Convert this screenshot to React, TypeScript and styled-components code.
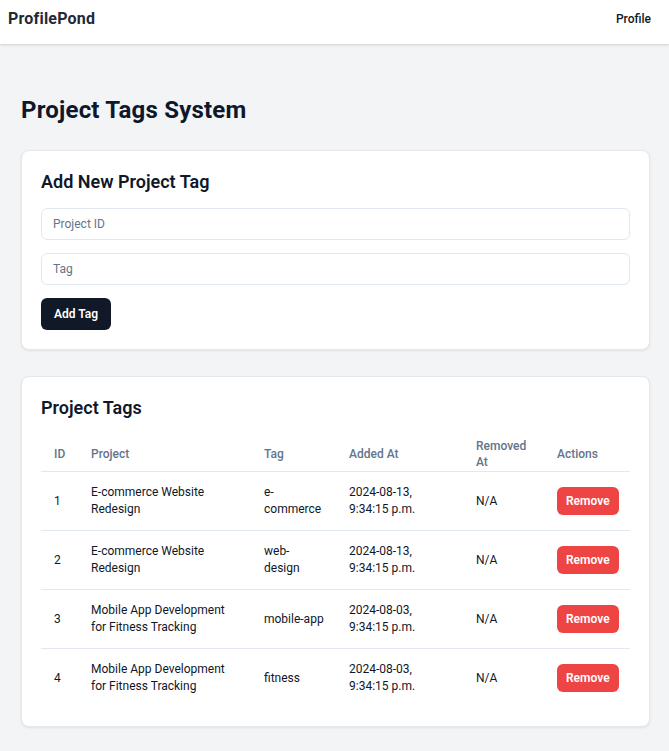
import React, { useState } from 'react';
import styled, { createGlobalStyle } from 'styled-components';

const GlobalStyle = createGlobalStyle`
  * { box-sizing: border-box; }
  body {
    margin: 0;
    background: #f3f4f6;
    font-family: Roboto, Inter, "Liberation Sans", sans-serif;
    color: #0f172a;
  }
`;

const NavBar = styled.nav`
  height: 44px;
  padding: 8px 18px 0 8px;
  display: flex;
  align-items: flex-start;
  justify-content: space-between;
  background: #fff;
  box-shadow: 0 1px 3px rgba(0, 0, 0, 0.1), 0 1px 2px rgba(0, 0, 0, 0.06);
`;

const Logo = styled.div`
  font-size: 16px;
  line-height: 22px;
  font-weight: 700;
  color: #1f2937;
  letter-spacing: 0.2px;
`;

const NavLink = styled.a`
  font-size: 12px;
  line-height: 22px;
  font-weight: 500;
  color: #111827;
  text-decoration: none;
  cursor: pointer;
`;

const Main = styled.main`
  padding: 50px 19px 24px 21px;
`;

const PageTitle = styled.h1`
  margin: 0 0 24px;
  font-size: 24px;
  line-height: 32px;
  font-weight: 700;
  color: #0f172a;
  letter-spacing: 0.2px;
`;

const Card = styled.section`
  background: #fff;
  border: 1px solid #e5e7eb;
  border-radius: 8px;
  box-shadow: 0 1px 3px rgba(0, 0, 0, 0.08);
  padding: 19px;
  margin-bottom: 26px;
`;

const CardTitle = styled.h2<{ $gap: number }>`
  margin: 0 0 ${(p) => p.$gap}px;
  font-size: 18px;
  line-height: 24px;
  font-weight: 600;
  color: #0f172a;
`;

const Form = styled.form`
  display: flex;
  flex-direction: column;
  align-items: flex-start;
  gap: 13px;
`;

const Input = styled.input`
  width: 100%;
  height: 32px;
  padding: 0 11px;
  border: 1px solid #e2e8f0;
  border-radius: 6px;
  font-family: inherit;
  font-size: 12px;
  color: #0f172a;
  outline: none;

  &::placeholder {
    color: #64748b;
  }
`;

const Button = styled.button<{ $variant?: 'dark' | 'danger' }>`
  border: none;
  border-radius: 6px;
  font-family: inherit;
  font-size: 12px;
  font-weight: 600;
  color: #fff;
  cursor: pointer;
  background: ${(p) => (p.$variant === 'danger' ? '#ef4444' : '#111827')};
  height: ${(p) => (p.$variant === 'danger' ? '28px' : '32px')};
  padding: ${(p) => (p.$variant === 'danger' ? '0 9px' : '0 13px')};
`;

const Table = styled.table`
  width: 100%;
  border-collapse: collapse;
  table-layout: fixed;
  font-size: 12px;
`;

const Th = styled.th<{ $w: number }>`
  width: ${(p) => p.$w}px;
  text-align: left;
  vertical-align: middle;
  padding: 2px 11px 1px 13px;
  line-height: 16px;
  font-weight: 500;
  color: #64748b;
`;

const HeadRow = styled.tr`
  border-bottom: 1px solid #e2e8f0;
`;

const Row = styled.tr`
  border-bottom: 1px solid #e2e8f0;

  &:last-child {
    border-bottom: none;
  }
`;

const Td = styled.td`
  padding: 12px 11px 12px 13px;
  line-height: 17px;
  vertical-align: middle;
  color: #0f172a;
`;

type TagRow = {
  id: number;
  project: string;
  tag: string;
  addedAt: string;
  removedAt: string | null;
};

const initialRows: TagRow[] = [
  { id: 1, project: 'E-commerce Website Redesign', tag: 'e-commerce', addedAt: '2024-08-13, 9:34:15 p.m.', removedAt: null },
  { id: 2, project: 'E-commerce Website Redesign', tag: 'web-design', addedAt: '2024-08-13, 9:34:15 p.m.', removedAt: null },
  { id: 3, project: 'Mobile App Development for Fitness Tracking', tag: 'mobile-app', addedAt: '2024-08-03, 9:34:15 p.m.', removedAt: null },
  { id: 4, project: 'Mobile App Development for Fitness Tracking', tag: 'fitness', addedAt: '2024-08-03, 9:34:15 p.m.', removedAt: null },
];

const columns = [
  { label: 'ID', w: 37 },
  { label: 'Project', w: 173 },
  { label: 'Tag', w: 85 },
  { label: 'Added At', w: 127 },
  { label: 'Removed At', w: 81 },
  { label: 'Actions', w: 86 },
];

export default function App() {
  const [rows, setRows] = useState(initialRows);
  const [projectId, setProjectId] = useState('');
  const [tag, setTag] = useState('');

  return (
    <>
      <GlobalStyle />
      <NavBar>
        <Logo>ProfilePond</Logo>
        <NavLink>Profile</NavLink>
      </NavBar>
      <Main>
        <PageTitle>Project Tags System</PageTitle>

        <Card>
          <CardTitle $gap={14}>Add New Project Tag</CardTitle>
          <Form onSubmit={(e) => e.preventDefault()}>
            <Input
              placeholder="Project ID"
              value={projectId}
              onChange={(e) => setProjectId(e.target.value)}
            />
            <Input placeholder="Tag" value={tag} onChange={(e) => setTag(e.target.value)} />
            <Button type="submit">Add Tag</Button>
          </Form>
        </Card>

        <Card>
          <CardTitle $gap={16}>Project Tags</CardTitle>
          <Table>
            <thead>
              <HeadRow>
                {columns.map((c) => (
                  <Th key={c.label} $w={c.w}>
                    {c.label}
                  </Th>
                ))}
              </HeadRow>
            </thead>
            <tbody>
              {rows.map((r) => (
                <Row key={r.id}>
                  <Td>{r.id}</Td>
                  <Td>{r.project}</Td>
                  <Td>{r.tag}</Td>
                  <Td>{r.addedAt}</Td>
                  <Td>{r.removedAt ?? 'N/A'}</Td>
                  <Td>
                    <Button
                      $variant="danger"
                      onClick={() => setRows(rows.filter((x) => x.id !== r.id))}
                    >
                      Remove
                    </Button>
                  </Td>
                </Row>
              ))}
            </tbody>
          </Table>
        </Card>
      </Main>
    </>
  );
}
